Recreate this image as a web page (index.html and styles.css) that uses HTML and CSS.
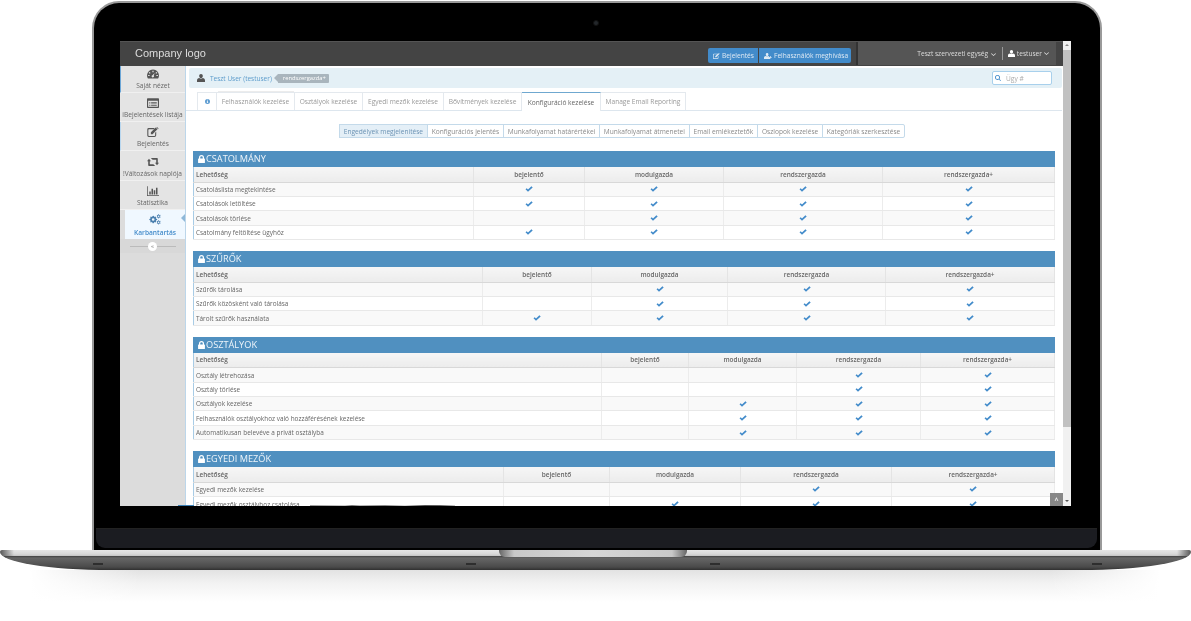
FILE: index.html
```html
<!DOCTYPE html>
<html lang="hu">
<head>
<meta charset="utf-8">
<title>Konfiguráció kezelése</title>
<link rel="stylesheet" href="styles.css">
</head>
<body>
<svg class="sprite" width="0" height="0" aria-hidden="true">
  <symbol id="i-check" viewBox="0 0 16 12"><path d="M1 6.6 3.4 4.4 6 7 12.8.6 15.4 3 6 11.6z"/></symbol>
  <symbol id="i-lock" viewBox="0 0 12 14"><path d="M1.6 6V4.4a4.4 4.4 0 0 1 8.8 0V6h.6c.5 0 1 .4 1 1v6c0 .6-.5 1-1 1H1c-.5 0-1-.4-1-1V7c0-.6.5-1 1-1zm2.2 0h4.400V4.400a2.200 2.200 0 0 0-4.400 0z"/></symbol>
  <symbol id="i-user" viewBox="0 0 14 14"><path d="M7 0c2 0 3.200 1.500 3.200 3.500S9 7.400 7 7.400 3.800 5.500 3.800 3.500 5 0 7 0zM4 7c.8.800 1.800 1.200 3 1.200S9.200 7.800 10 7c2.400.3 4 1.500 4 4.200V14H0v-2.800C0 8.500 1.600 7.300 4 7z"/></symbol>
  <symbol id="i-userplus" viewBox="0 0 18 13"><path d="M7 0c1.800 0 3 1.400 3 3.200S8.800 6.800 7 6.800 4 5 4 3.200 5.200 0 7 0zM4 6.500c.8.700 1.800 1 3 1s2.200-.3 3-1c1 .1 1.900.4 2.500 1H11v2.500h2.500V13H0v-2.600C0 8 1.800 6.800 4 6.500zM14 6.500h1.600v2h2.400v1.600h-2.400v2H14v-2h-2.400V8.500H14z"/></symbol>
  <symbol id="i-edit" viewBox="0 0 16 14"><path d="M2 1.500h8.500L9 3H2.500a1 1 0 0 0-1 1v7.500a1 1 0 0 0 1 1H10a1 1 0 0 0 1-1V8l1.500-1.500v5A2.500 2.500 0 0 1 10 14H2a2 2 0 0 1-2-2V3.500a2 2 0 0 1 2-2z"/><path d="M5 7.500 11.800.8l2.400 2.400L7.400 10H5zM12.600 0l.8-.2 2.400 2.400-.8.800z"/></symbol>
  <symbol id="i-dash" viewBox="0 0 16 12"><path fill-rule="evenodd" d="M8 0a8 8 0 0 1 7 11.800l-.2.200H1.200l-.2-.2A8 8 0 0 1 8 0zM7.200 1.500v2h1.600v-2zM3.400 3.200 2.300 4.300l1.400 1.400 1.100-1.100zM12.600 3.200l-1.400 1.400 1.100 1.100 1.400-1.400zM1.500 7.200v1.600h2V7.200zM12.500 7.200v1.600h2V7.200zM10.200 4.500 7.400 7.600a1.500 1.500 0 1 0 1.600.7z"/></symbol>
  <symbol id="i-list" viewBox="0 0 16 13"><path fill-rule="evenodd" d="M1 0h14a1 1 0 0 1 1 1v11a1 1 0 0 1-1 1H1a1 1 0 0 1-1-1V1a1 1 0 0 1 1-1zm.500 3.500v8h13v-8zM3 5.200h1.500v1H3zM5.500 5.200H13v1H5.500zM3 7.200h1.500v1H3zM5.500 7.200H13v1H5.500zM3 9.200h1.500v1H3zM5.500 9.200H13v1H5.500z"/></symbol>
  <symbol id="i-retweet" viewBox="0 0 18 12"><path d="M12 11.500a.5.5 0 0 1-.5.5H3c-.8 0-1.200-.5-1.200-1.200V5H0l3-3.800L6 5H4.200v4.500h5.300zM6 .5a.5.500 0 0 1 .5-.5H15c.8 0 1.200.5 1.200 1.200V7H18l-3 3.800L12 7h1.800V2.500H8.500z"/></symbol>
  <symbol id="i-chart" viewBox="0 0 16 13"><path d="M0 0h1v12h15v1H0zM3 7h2v4H3zM6 3.500h2V11H6zM9 5.500h2V11H9zM12 2h2v9h-2z"/></symbol>
  <symbol id="i-cogs" viewBox="0 0 18 16"><path fill-rule="evenodd" d="M5.500 3.500 7 3l.6 1.300 1.300.6L10 4.200l1 1-.7 1.100.5 1.300 1.400.4v1.500l-1.400.4-.5 1.300.7 1.100-1 1-1.100-.7-1.300.6L7 14.500H5.500l-.4-1.400-1.300-.5-1.100.7-1-1 .7-1.100-.6-1.300L.5 9.500V8l1.300-.4.6-1.300-.7-1.100 1-1 1.100.7 1.300-.6zM6.200 6.800a2 2 0 1 0 .1 4 2 2 0 0 0-.1-4z"/><path fill-rule="evenodd" d="M14 .5l1 .2.1 1 .8.500.9-.4.5.9-.7.700v1l.7.700-.5.900-.9-.4-.8.5-.1 1h-1l-.1-1-.8-.5-.9.4-.5-.9.7-.7v-1l-.7-.7.5-.9.900.4.800-.5zM14.500 2.800a1.200 1.200 0 1 0 0 2.400 1.200 1.200 0 0 0 0-2.400zM14 9.500l1 .2.1 1 .8.500.9-.4.5.9-.7.700v1l.7.700-.5.900-.9-.4-.8.5-.1 1h-1l-.1-1-.8-.5-.9.4-.5-.9.7-.7v-1l-.7-.7.5-.9.900.4.800-.5zM14.500 11.800a1.200 1.200 0 1 0 0 2.400 1.200 1.200 0 0 0 0-2.400z"/></symbol>
  <symbol id="i-info" viewBox="0 0 14 14"><path fill-rule="evenodd" d="M7 0a7 7 0 1 1 0 14A7 7 0 0 1 7 0zM5.800 2.400v2h2.400v-2zM5 5.500v1.400h1v3H5v1.500h4V9.900H8V5.500z"/></symbol>
  <symbol id="i-search" viewBox="0 0 14 14"><path fill-rule="evenodd" d="M5.800 0a5.800 5.800 0 0 1 4.700 9.200l3.500 3.400-1.400 1.400-3.400-3.500A5.800 5.800 0 1 1 5.800 0zm0 2a3.800 3.800 0 1 0 0 7.600 3.800 3.800 0 0 0 0-7.600z"/></symbol>
  <symbol id="i-chev" viewBox="0 0 10 6"><path d="M1 .5 5 4 9 .5l1 1-5 4.500L0 1.500z"/></symbol>
</svg>

<div class="laptop">
  <div class="lid">
    <div class="bezel-top"><span class="camera"></span></div>
    <div class="screen">
      <div class="app">
        <header class="topbar">
          <div class="logo">Company logo</div>
          <div class="actions">
            <a class="act act-first"><svg class="ic-btn"><use href="#i-edit"/></svg>Bejelentés</a>
            <a class="act act-last"><svg class="ic-btn-w"><use href="#i-userplus"/></svg>Felhasználók meghívása</a>
          </div>
          <div class="account">
            <span class="org">Teszt szervezeti egység <svg class="chev"><use href="#i-chev"/></svg></span>
            <span class="acc-sep"></span>
            <span class="usr"><svg class="ic-usr"><use href="#i-user"/></svg>testuser <svg class="chev"><use href="#i-chev"/></svg></span>
          </div>
        </header>
        <div class="main">
          <nav class="side">
            <a class="nav nav-first h27"><svg class="nav-ic"><use href="#i-dash"/></svg>Saját nézet</a>
            <a class="nav h29"><svg class="nav-ic"><use href="#i-list"/></svg>iBejelentések listája</a>
            <a class="nav nav-mark h29"><svg class="nav-ic"><use href="#i-edit"/></svg>Bejelentés</a>
            <a class="nav h30"><svg class="nav-ic"><use href="#i-retweet"/></svg>!Változások naplója</a>
            <a class="nav h29"><svg class="nav-ic"><use href="#i-chart"/></svg>Statisztika</a>
            <a class="nav nav-on h29"><svg class="nav-ic"><use href="#i-cogs"/></svg>Karbantartás</a>
            <div class="collapse"><span class="collapse-dot">«</span></div>
          </nav>
          <div class="content">
            <div class="infobar">
              <svg class="ic-who"><use href="#i-user"/></svg>
              <span class="who">Teszt User (testuser)</span>
              <span class="role">rendszergazda+</span>
              <span class="search"><svg class="ic-search"><use href="#i-search"/></svg>Ügy #</span>
            </div>
            <div class="tabs">
              <a class="tab tab-info"><svg class="ic-info"><use href="#i-info"/></svg></a>
              <a class="tab tab-over w78">Felhasználók kezelése</a>
              <a class="tab w68">Osztályok kezelése</a>
              <a class="tab w81">Egyedi mezők kezelése</a>
              <a class="tab w78">Bővítmények kezelése</a>
              <a class="tab tab-on w79">Konfiguráció kezelése</a>
              <a class="tab w85">Manage Email Reporting</a>
            </div>
            <div class="pills">
              <a class="pill pill-on">Engedélyek megjelenítése</a>
              <a class="pill">Konfigurációs jelentés</a>
              <a class="pill">Munkafolyamat határértékei</a>
              <a class="pill">Munkafolyamat átmenetei</a>
              <a class="pill">Email emlékeztetők</a>
              <a class="pill">Oszlopok kezelése</a>
              <a class="pill pill-last">Kategóriák szerkesztése</a>
            </div>

            <section class="panel">
              <h2 class="panel-h"><svg class="ic-lock"><use href="#i-lock"/></svg>CSATOLMÁNY</h2>
              <table class="perm">
                <colgroup><col class="c280"><col class="c111"><col class="c139"><col class="c159"><col></colgroup>
                <thead><tr><th>Lehetőség</th><th>bejelentő</th><th>modulgazda</th><th>rendszergazda</th><th>rendszergazda+</th></tr></thead>
                <tbody>
                  <tr><td>Csatoláslista megtekintése</td><td><svg class="ck"><use href="#i-check"/></svg></td><td><svg class="ck"><use href="#i-check"/></svg></td><td><svg class="ck"><use href="#i-check"/></svg></td><td><svg class="ck"><use href="#i-check"/></svg></td></tr>
                  <tr><td>Csatolások letöltése</td><td><svg class="ck"><use href="#i-check"/></svg></td><td><svg class="ck"><use href="#i-check"/></svg></td><td><svg class="ck"><use href="#i-check"/></svg></td><td><svg class="ck"><use href="#i-check"/></svg></td></tr>
                  <tr><td>Csatolások törlése</td><td></td><td><svg class="ck"><use href="#i-check"/></svg></td><td><svg class="ck"><use href="#i-check"/></svg></td><td><svg class="ck"><use href="#i-check"/></svg></td></tr>
                  <tr><td>Csatolmány feltöltése ügyhöz</td><td><svg class="ck"><use href="#i-check"/></svg></td><td><svg class="ck"><use href="#i-check"/></svg></td><td><svg class="ck"><use href="#i-check"/></svg></td><td><svg class="ck"><use href="#i-check"/></svg></td></tr>
                </tbody>
              </table>
            </section>

            <section class="panel">
              <h2 class="panel-h"><svg class="ic-lock"><use href="#i-lock"/></svg>SZŰRŐK</h2>
              <table class="perm">
                <colgroup><col class="c289"><col class="c109"><col class="c136"><col class="c158"><col></colgroup>
                <thead><tr><th>Lehetőség</th><th>bejelentő</th><th>modulgazda</th><th>rendszergazda</th><th>rendszergazda+</th></tr></thead>
                <tbody>
                  <tr><td>Szűrők tárolása</td><td></td><td><svg class="ck"><use href="#i-check"/></svg></td><td><svg class="ck"><use href="#i-check"/></svg></td><td><svg class="ck"><use href="#i-check"/></svg></td></tr>
                  <tr><td>Szűrők közösként való tárolása</td><td></td><td><svg class="ck"><use href="#i-check"/></svg></td><td><svg class="ck"><use href="#i-check"/></svg></td><td><svg class="ck"><use href="#i-check"/></svg></td></tr>
                  <tr><td>Tárolt szűrők használata</td><td><svg class="ck"><use href="#i-check"/></svg></td><td><svg class="ck"><use href="#i-check"/></svg></td><td><svg class="ck"><use href="#i-check"/></svg></td><td><svg class="ck"><use href="#i-check"/></svg></td></tr>
                </tbody>
              </table>
            </section>

            <section class="panel">
              <h2 class="panel-h"><svg class="ic-lock"><use href="#i-lock"/></svg>OSZTÁLYOK</h2>
              <table class="perm">
                <colgroup><col class="c408"><col class="c87"><col class="c108"><col class="c124"><col></colgroup>
                <thead><tr><th>Lehetőség</th><th>bejelentő</th><th>modulgazda</th><th>rendszergazda</th><th>rendszergazda+</th></tr></thead>
                <tbody>
                  <tr><td>Osztály létrehozása</td><td></td><td></td><td><svg class="ck"><use href="#i-check"/></svg></td><td><svg class="ck"><use href="#i-check"/></svg></td></tr>
                  <tr><td>Osztály törlése</td><td></td><td></td><td><svg class="ck"><use href="#i-check"/></svg></td><td><svg class="ck"><use href="#i-check"/></svg></td></tr>
                  <tr><td>Osztályok kezelése</td><td></td><td><svg class="ck"><use href="#i-check"/></svg></td><td><svg class="ck"><use href="#i-check"/></svg></td><td><svg class="ck"><use href="#i-check"/></svg></td></tr>
                  <tr><td>Felhasználók osztályokhoz való hozzáférésének kezelése</td><td></td><td><svg class="ck"><use href="#i-check"/></svg></td><td><svg class="ck"><use href="#i-check"/></svg></td><td><svg class="ck"><use href="#i-check"/></svg></td></tr>
                  <tr><td>Automatikusan belevéve a privát osztályba</td><td></td><td><svg class="ck"><use href="#i-check"/></svg></td><td><svg class="ck"><use href="#i-check"/></svg></td><td><svg class="ck"><use href="#i-check"/></svg></td></tr>
                </tbody>
              </table>
            </section>

            <section class="panel">
              <h2 class="panel-h"><svg class="ic-lock"><use href="#i-lock"/></svg>EGYEDI MEZŐK</h2>
              <table class="perm">
                <colgroup><col class="c310"><col class="c106"><col class="c131"><col class="c151"><col></colgroup>
                <thead><tr><th>Lehetőség</th><th>bejelentő</th><th>modulgazda</th><th>rendszergazda</th><th>rendszergazda+</th></tr></thead>
                <tbody>
                  <tr><td>Egyedi mezők kezelése</td><td></td><td></td><td><svg class="ck"><use href="#i-check"/></svg></td><td><svg class="ck"><use href="#i-check"/></svg></td></tr>
                  <tr><td>Egyedi mezők osztályhoz csatolása</td><td></td><td><svg class="ck"><use href="#i-check"/></svg></td><td><svg class="ck"><use href="#i-check"/></svg></td><td><svg class="ck"><use href="#i-check"/></svg></td></tr>
                </tbody>
              </table>
            </section>
            <a class="totop">^</a>
          </div>
        </div>
      </div>
      <div class="scroll">
        <span class="sc-btn sc-up"></span>
        <span class="sc-thumb"></span>
        <span class="sc-btn sc-down"></span>
      </div>
      <span class="glitch"></span>
    </div>
    <div class="chin"></div>
  </div>
  <div class="base">
    <div class="notch"></div>
    <span class="foot foot-a"></span>
    <span class="foot foot-b"></span>
    <span class="foot foot-d"></span>
    <span class="foot foot-c"></span>
  </div>
  <div class="floor"></div>
</div>
</body>
</html>
```
FILE: styles.css
```css
* { box-sizing: border-box; }
html, body { margin: 0; padding: 0; background: #fff; }
body { width: 1191px; height: 621px; overflow: hidden; font-family: "Open Sans", "Liberation Sans", sans-serif; font-size: 6.6px; color: #666; }
svg { display: inline-block; fill: currentColor; }
.sprite { position: absolute; }

.laptop { display: flex; flex-direction: column; }
.lid { width: 1010px; height: 549px; margin: 1px 0 0 92px; padding: 0 28px 0 26px; background: #000; border: 2px solid #9a9a9a; border-bottom: 0; border-radius: 27px 27px 0 0; display: flex; flex-direction: column; }
.bezel-top { height: 38px; flex: none; display: flex; align-items: flex-start; justify-content: center; padding-top: 17px; }
.camera { width: 6px; height: 6px; border-radius: 50%; background: #23272b; border: 1px solid #111; }
.screen { position: relative; width: 951px; height: 465px; flex: none; display: flex; background: #fff; overflow: hidden; filter: blur(.25px); }
.glitch { position: absolute; left: 0; bottom: 0; width: 340px; height: 1px; background: linear-gradient(90deg, transparent 58px, #3b7fb4 58px, #3b7fb4 74px, transparent 74px, transparent 190px, #999 190px, #ccc 225px, #777 232px, #bbb 240px, #888 265px, #ddd 285px, #555 305px, #666 320px, #ccc 335px, transparent 335px); }
.chin { height: 20px; flex: none; margin: 22px -25px 0 -24px; background: #1b1c21; border-top: 1px solid #222; border-radius: 0 0 9px 9px; }

.base { position: relative; height: 20px; flex: none; background:
  linear-gradient(90deg, #555 0, transparent 14px, transparent 1177px, #555 1191px) 0 0 / 100% 6px no-repeat,
  linear-gradient(#e6e6e6 0, #d8d8d8 4px, #c4c4c4 6px, #4a4a4a 6.5px, #666 8px, #5a5a5a 12px, #4a4a4a 17px, #303030 20px);
  border-radius: 2px 2px 110px 110px / 2px 2px 18px 18px; }
.notch { width: 188px; height: 7px; margin-left: 499px; background: linear-gradient(90deg, #666, #c8c8c8 8%, #d6d6d6 50%, #c8c8c8 92%, #666); border-radius: 0 0 6px 6px; }
.foot { position: absolute; top: 13px; width: 10px; height: 2px; background: #2e2e2e; }
.foot-a { left: 93px; }
.foot-b { left: 466px; }
.foot-d { left: 710px; }
.foot-c { left: 1092px; }
.floor { height: 32px; flex: none; background:
  linear-gradient(90deg, #fff 30px, transparent 140px, transparent 1050px, #fff 1160px),
  linear-gradient(#e2e2e2, #f2f2f2 40%, #fff); }

.app { flex: 1; min-width: 0; display: flex; flex-direction: column; }
.topbar { height: 25px; flex: none; display: flex; background: #444; color: #e4e4e4; border-top: 1px solid #555; }
.logo { flex: 1; padding: 3px 0 0 15px; font-size: 11px; font-family: "Liberation Sans", Arial, sans-serif; line-height: 16px; color: #ddd; }
.actions { display: flex; height: 15px; margin: 6px 5px 0 0; }
.act { display: flex; align-items: center; padding: 0 0 0 5px; background: #428bca; color: #dfeaf4; border-radius: 2px 0 0 2px; white-space: nowrap; }
.act-first { width: 50px; margin-right: 1px; }
.act-last { width: 92px; border-radius: 0 2px 2px 0; }
.ic-btn { width: 7px; height: 6px; margin-right: 2px; }
.ic-btn-w { width: 8px; height: 6px; margin-right: 2px; }
.account { width: 200px; height: 23px; flex: none; margin-right: 7px; display: flex; align-items: center; justify-content: flex-end; background: #555; border-left: 2px solid #333; padding: 0 7px 0 0; color: #ddd; font-size: 6.6px; }
.org { margin-right: 6px; white-space: nowrap; }
.acc-sep { width: 1px; height: 13px; background: #999; margin-right: 5px; }
.usr { display: flex; align-items: center; gap: 1px; }
.chev { width: 5px; height: 3px; margin-left: 1px; }
.ic-usr { width: 7px; height: 7px; color: #fff; margin-right: 1px; }

.main { flex: 1; min-height: 0; display: flex; }
.side { width: 66px; flex: none; background: #dcdcdc; border-right: 1px solid #bcd6ea; display: flex; flex-direction: column; color: #666; }
.nav { display: flex; flex-direction: column; align-items: center; gap: 2px; padding-top: 5px; white-space: nowrap; background: #e4e4e4; border-bottom: 1px solid #f0f0f0; color: #666; }
.h27 { height: 27px; padding-top: 3px; }
.h29 { height: 29px; }
.h30 { height: 30px; padding-top: 6px; }
.nav-first { border-left: 1px solid #6ca6d6; }
.nav-mark { border-left: 1px solid #b8d6ee; }
.nav-ic { width: 12px; height: 10px; color: #555; flex: none; }
.nav-on { position: relative; margin-left: 5px; padding-top: 3px; background: #f0f8ff; color: #428bca; font-weight: 600; border-bottom: 0; gap: 3px; }
.nav-on .nav-ic { color: #4a7fae; height: 12px; }
.nav-on::after { content: ""; position: absolute; right: 0; top: 4px; border: 4px solid transparent; border-right-color: #8fb8d8; border-left: 0; }
.collapse { height: 14px; flex: none; display: flex; align-items: center; justify-content: center; background: linear-gradient(#bbb, #bbb) center / 46px 1px no-repeat #d8d8d8; }
.collapse-dot { width: 9px; height: 9px; border-radius: 50%; background: #fff; font-size: 6px; line-height: 8px; text-align: center; color: #777; }

.content { position: relative; flex: 1; min-width: 0; overflow: hidden; padding: 2px 1px 0 3px; }
.infobar { display: flex; align-items: center; height: 20px; padding: 0 10px 0 8px; background: #e4f0f6; border-radius: 2px; }
.ic-who { width: 8px; height: 8px; color: #555; margin-right: 5px; flex: none; }
.who { color: #5d9ccb; margin-right: 6px; font-size: 6.5px; }
.role { position: relative; height: 9px; padding: 0 3px 0 5px; line-height: 9px; background: #a9b5bd; color: #fff; font-size: 5.8px; border-radius: 0 1px 1px 0; }
.role::before { content: ""; position: absolute; left: -4px; top: 0; border: 4.5px solid transparent; border-right-color: #a9b5bd; border-left: 0; }
.search { display: flex; align-items: center; height: 14px; width: 60px; margin-left: auto; padding-left: 2px; background: #fff; border: 1px solid #a8d0ec; border-radius: 2px; color: #aaa; }
.ic-search { width: 6px; height: 6px; margin-right: 5px; color: #428bca; }

.tabs { display: flex; height: 19px; margin: 4px 0 0 -3px; padding-left: 11px; border-bottom: 1px solid #dde6ee; }
.tab { display: flex; align-items: center; justify-content: center; height: 18px; border: 1px solid #e4e9ee; border-left: 0; border-bottom: 0; color: #999; white-space: nowrap; }
.tab-info { width: 20px; border-left: 1px solid #e4e9ee; }
.tab-over { position: relative; }
.tab-over::before { content: ""; position: absolute; left: 1px; right: 0; top: -2px; height: 1px; background: #ececec; }
.ic-info { width: 5px; height: 5px; color: #5b9bd1; }
.w68 { width: 68px; }
.w78 { width: 78px; }
.w79 { width: 79px; }
.w81 { width: 81px; }
.w85 { width: 85px; }
.tab-on { color: #666; border-top: 1px solid #6fa8d0; background: #fff; height: 19px; }

.pills { display: flex; justify-content: center; height: 14px; margin: 13px 6px 13px 0; }
.pill { display: flex; align-items: center; height: 14px; padding: 0 3.8px; background: #fff; border: 1px solid #c4daea; color: #8a8a8a; margin-left: -1px; white-space: nowrap; }
.pill-on { background: #e4eff7; color: #6c93b4; }
.pill-last { border-radius: 0 2px 2px 0; }

.panel { margin: 0 7px 11px 4px; }
.panel-h { display: flex; align-items: center; height: 16px; margin: 0; padding-left: 5px; background: #5090c0; color: #eef5fa; font-size: 9.2px; font-weight: 400; line-height: 16px; }
.ic-lock { width: 7px; height: 8px; margin-right: 1px; color: #fff; }
.perm { width: 100%; border-collapse: collapse; table-layout: fixed; border: 1px solid #a8cce6; border-top: 0; background: #fff; font-size: 6.45px; }
.perm th { height: 15px; padding: 0 2px; background: linear-gradient(#f6f6f6, #ececec); border-right: 1px solid #e4e4e4; border-bottom: 1px solid #d8d8d8; color: #666; font-weight: 600; text-align: center; }
.perm th:first-child, .perm td:first-child { text-align: left; }
.perm td { height: 14.4px; padding: 0 2px; border-right: 1px solid #ececec; border-bottom: 1px solid #e8e8e8; text-align: center; color: #666; line-height: 1; }
.perm td:first-child { padding-top: 2px; }
.perm tbody tr:nth-child(odd) td { background: #f9f9f9; }
.c87 { width: 87px; }
.c106 { width: 106px; }
.c108 { width: 108px; }
.c109 { width: 109px; }
.c111 { width: 111px; }
.c124 { width: 124px; }
.c131 { width: 131px; }
.c136 { width: 136px; }
.c139 { width: 139px; }
.c151 { width: 151px; }
.c158 { width: 158px; }
.c159 { width: 159px; }
.c280 { width: 280px; }
.c289 { width: 289px; }
.c310 { width: 310px; }
.c408 { width: 408px; }
.ck { width: 8px; height: 6px; color: #428bca; vertical-align: middle; }

.totop { position: absolute; right: 0; bottom: 0; width: 13px; height: 13px; background: #888; color: #eee; font-size: 7px; font-weight: 700; line-height: 15px; text-align: center; }

.scroll { width: 8px; flex: none; display: flex; flex-direction: column; background: #f1f1f1; }
.sc-btn { height: 9px; flex: none; position: relative; }
.sc-btn::after { content: ""; position: absolute; left: 2px; top: 3px; border: 2px solid transparent; }
.sc-up::after { border-bottom-color: #888; border-top: 0; }
.sc-down { margin-top: auto; }
.sc-down::after { border-top-color: #555; border-bottom: 0; }
.sc-thumb { height: 377px; flex: none; background: #c1c1c1; }
```
